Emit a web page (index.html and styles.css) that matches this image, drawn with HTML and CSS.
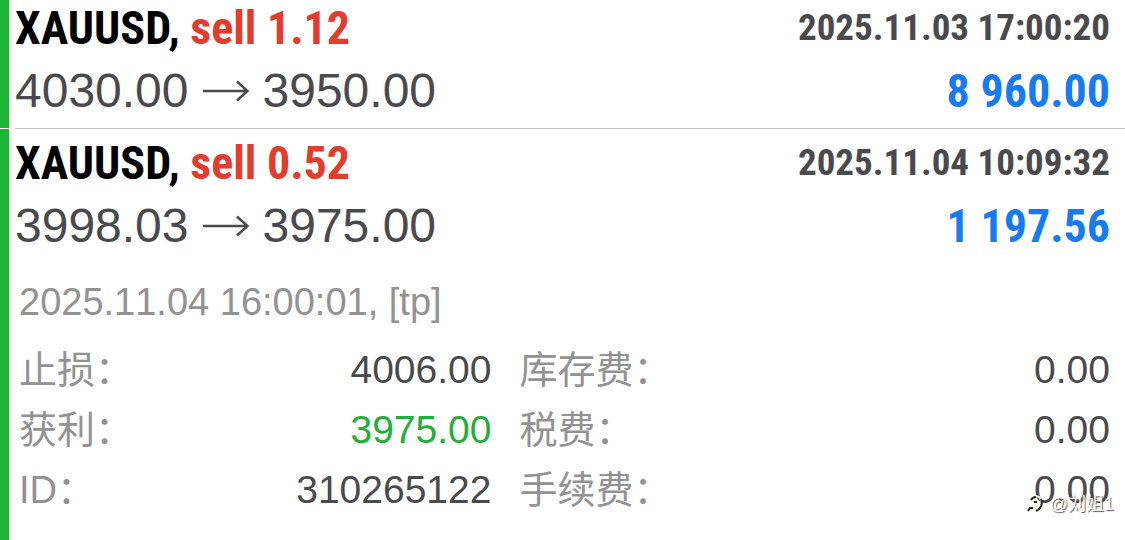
FILE: index.html
```
<!DOCTYPE html>
<html lang="zh-CN">
<head>
<meta charset="utf-8">
<meta name="viewport" content="width=device-width, initial-scale=1">
<title>XAUUSD</title>
<link rel="stylesheet" href="styles.css">
</head>
<body>
<main class="history">
  <article class="deal deal-first">
    <div class="row">
      <h2 class="symbol">XAUUSD, <span class="side">sell 1.12</span></h2>
      <time class="time">2025.11.03 17:00:20</time>
    </div>
    <div class="row">
      <p class="prices">4030.00
        <svg class="arrow" viewBox="0 0 46 24" aria-hidden="true"><path d="M0 12H44M34 2.500L44.500 12L34 21.500"/></svg>
        3950.00</p>
      <span class="profit">8 960.00</span>
    </div>
  </article>
  <article class="deal deal-open">
    <div class="row">
      <h2 class="symbol">XAUUSD, <span class="side">sell 0.52</span></h2>
      <time class="time">2025.11.04 10:09:32</time>
    </div>
    <div class="row">
      <p class="prices">3998.03
        <svg class="arrow" viewBox="0 0 46 24" aria-hidden="true"><path d="M0 12H44M34 2.500L44.500 12L34 21.500"/></svg>
        3975.00</p>
      <span class="profit">1 197.56</span>
    </div>
    <section class="details">
      <p class="closed">2025.11.04 16:00:01, [tp]</p>
      <dl class="facts">
        <div class="fact"><dt>止损：</dt><dd>4006.00</dd></div>
        <div class="fact"><dt>库存费：</dt><dd>0.00</dd></div>
        <div class="fact"><dt>获利：</dt><dd class="gain">3975.00</dd></div>
        <div class="fact"><dt>税费：</dt><dd>0.00</dd></div>
        <div class="fact"><dt>ID：</dt><dd>310265122</dd></div>
        <div class="fact"><dt>手续费：</dt><dd>0.00</dd></div>
      </dl>
    </section>
  </article>
  <div class="watermark">
    <svg class="mark" viewBox="0 0 18 20" aria-hidden="true">
      <path class="mark-light" d="M2 5C6 0 13 1 14 7C15 13 11 15 8 16M1 16L3 11H7M6 6L9 7"/>
      <path class="mark-shade" d="M4 6C5 4 7 3 9 3M14 5C16 10 14 15 9 17M1 17L3 14H6M7 8L10 8"/>
    </svg>
    <span>@刘姐1</span>
  </div>
</main>
</body>
</html>
```
FILE: styles.css
```
* {
  box-sizing: border-box;
}

body {
  margin: 0;
  background: #fff;
  color: #4a494e;
  font-family: "Liberation Sans", "Noto Sans CJK SC", sans-serif;
  font-kerning: none;
}

h2, p, dl, dd {
  margin: 0;
}

.history {
  position: relative;
  display: flex;
  flex-direction: column;
  gap: 1px;
  min-height: 100vh;
}

.deal {
  position: relative;
  display: flex;
  flex-direction: column;
  gap: 7px;
  padding: 6px 15px 9px 6px;
  border-left: 9px solid #1db535;
}

.deal-first {
  padding-top: 0;
}

.deal-open {
  flex: 1;
}

.deal + .deal::before {
  content: "";
  position: absolute;
  top: -1px;
  left: 6px;
  right: 0;
  height: 1px;
  background: #c2c2c4;
}

.row {
  display: flex;
  justify-content: space-between;
  align-items: flex-start;
  line-height: 56px;
  white-space: nowrap;
}

.symbol,
.time,
.profit {
  font-family: "Roboto Condensed", Roboto, "Liberation Sans", sans-serif;
  font-weight: 700;
  font-kerning: normal;
}

.symbol {
  color: #000;
  font-size: 46px;
}

.side {
  color: #e33b2c;
}

.time {
  font-size: 37px;
}

.prices {
  display: flex;
  align-items: center;
  gap: 14px;
  font-size: 48px;
}

.arrow {
  width: 46px;
  height: 24px;
  fill: none;
  stroke: #4a494e;
  stroke-width: 2.500;
}

.profit {
  color: #147bf3;
  font-size: 46px;
}

.details {
  display: flex;
  flex-direction: column;
  gap: 8px;
  padding: 11px 0 0 4px;
  font-size: 38px;
  line-height: 60px;
}

.closed,
dt {
  color: #929292;
}

.facts {
  display: grid;
  grid-template-columns: 4fr 5fr;
  column-gap: 28px;
}

.fact {
  display: flex;
  justify-content: space-between;
}

dd {
  font-size: 39px;
}

.gain {
  color: #1fae36;
}

.watermark {
  position: absolute;
  right: 11px;
  bottom: 24px;
  display: flex;
  align-items: center;
  gap: 5px;
  color: #fff;
  font-size: 18px;
  line-height: 24px;
  text-shadow: 1px 1px 1px #555;
}

.mark {
  width: 18px;
  height: 20px;
  fill: none;
  stroke-width: 2;
}

.mark-shade {
  stroke: #222;
}

.mark-light {
  stroke: #fff;
}
```
